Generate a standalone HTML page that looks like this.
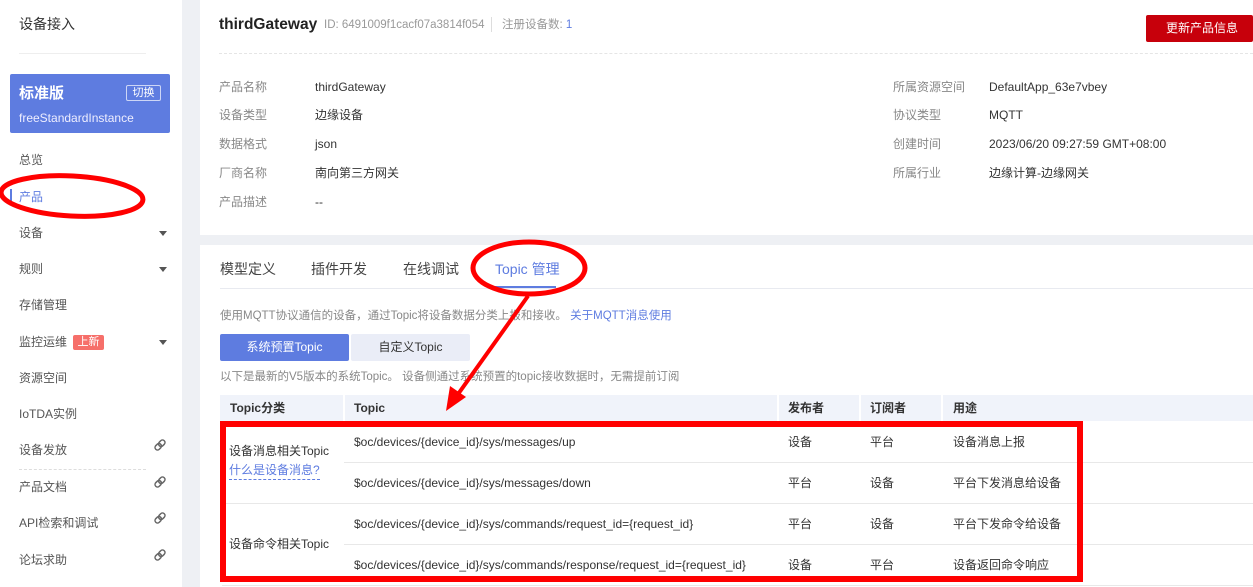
<!DOCTYPE html>
<html><head><meta charset="utf-8"><style>
*{margin:0;padding:0;box-sizing:border-box}
body{width:1253px;height:587px;overflow:hidden;background:#eef0f4;font-family:"Liberation Sans","Noto Sans CJK SC",sans-serif;position:relative;color:#333;line-height:15px}
.a{position:absolute;white-space:nowrap}
.side{position:absolute;left:0;top:0;width:182px;height:587px;background:#fff}
.nav{position:absolute;left:19px;font-size:12px;color:#555;white-space:nowrap}
.caret{position:absolute;left:159px;width:0;height:0;border-left:4px solid transparent;border-right:4px solid transparent;border-top:5px solid #555}
.lk{position:absolute;left:154px}
.lbl{position:absolute;font-size:12px;color:#888;white-space:nowrap}
.val{position:absolute;font-size:12px;color:#333;white-space:nowrap}
.td{position:absolute;font-size:12px;color:#333;white-space:nowrap}
.hl{position:absolute;left:222px;width:1031px;height:1px;background:#e8e8e8}
</style></head><body>
<div class="side">
<div class="a" style="left:19px;top:17px;font-size:14px;color:#333">设备接入</div>
<div class="a" style="left:19px;top:53px;width:127px;height:1px;background:#eee"></div>
<div class="a" style="left:10px;top:74px;width:160px;height:59px;background:#5e7ce0;border-radius:2px"></div>
<div class="a" style="left:19px;top:85px;font-size:15px;color:#fff;font-weight:bold;line-height:17px">标准版</div>
<div class="a" style="left:126px;top:85px;width:35px;height:16px;border:1px solid #cdd6f6;border-radius:2px;color:#fff;font-size:11px;text-align:center;line-height:14px">切换</div>
<div class="a" style="left:19px;top:111px;font-size:12px;color:#eef">freeStandardInstance</div>
<div class="nav" style="top:153px">总览</div>
<div class="a" style="left:10px;top:189px;width:2px;height:16px;background:#5e7ce0"></div>
<div class="nav" style="top:190px;color:#5e7ce0">产品</div>
<div class="nav" style="top:226px">设备</div><div class="caret" style="top:231px"></div>
<div class="nav" style="top:262px">规则</div><div class="caret" style="top:267px"></div>
<div class="nav" style="top:298px">存储管理</div>
<div class="nav" style="top:335px">监控运维</div>
<div class="a" style="left:73px;top:335px;width:31px;height:15px;background:#f66f6a;border-radius:2px;color:#fff;font-size:11px;text-align:center;line-height:15px">上新</div>
<div class="caret" style="top:340px"></div>
<div class="nav" style="top:371px">资源空间</div>
<div class="nav" style="top:407px">IoTDA实例</div>
<div class="nav" style="top:443px">设备发放</div>
<div class="a" style="left:19px;top:469px;width:127px;border-top:1px dashed #ddd"></div>
<div class="nav" style="top:480px">产品文档</div>
<div class="nav" style="top:516px">API检索和调试</div>
<div class="nav" style="top:553px">论坛求助</div>
<svg class="a" style="left:0;top:0" width="182" height="587">
<g fill="none" stroke="#666" stroke-width="1.5">
<g transform="translate(160,445) rotate(-45)"><rect x="-6" y="-2.5" width="7" height="5" rx="2.5"/><rect x="-1" y="-2.5" width="7" height="5" rx="2.5"/></g>
<g transform="translate(160,482) rotate(-45)"><rect x="-6" y="-2.5" width="7" height="5" rx="2.5"/><rect x="-1" y="-2.5" width="7" height="5" rx="2.5"/></g>
<g transform="translate(160,518) rotate(-45)"><rect x="-6" y="-2.5" width="7" height="5" rx="2.5"/><rect x="-1" y="-2.5" width="7" height="5" rx="2.5"/></g>
<g transform="translate(160,555) rotate(-45)"><rect x="-6" y="-2.5" width="7" height="5" rx="2.5"/><rect x="-1" y="-2.5" width="7" height="5" rx="2.5"/></g>
</g></svg>
</div>
<!-- top card -->
<div class="a" style="left:200px;top:0;width:1053px;height:235px;background:#fff"></div>
<div class="a" style="left:219px;top:16px;font-size:15.5px;font-weight:bold;color:#222;line-height:18px">thirdGateway</div>
<div class="a" style="left:324px;top:18px;font-size:11.5px;color:#999">ID: 6491009f1cacf07a3814f054</div>
<div class="a" style="left:491px;top:17px;width:1px;height:15px;background:#ddd"></div>
<div class="a" style="left:502px;top:18px;font-size:11.5px;color:#999">注册设备数: <span style="color:#5e7ce0">1</span></div>
<div class="a" style="left:1146px;top:15px;width:107px;height:27px;background:#c7000b;border-radius:2px;color:#fff;font-size:12px;line-height:27px;padding-left:20px">更新产品信息</div>
<div class="a" style="left:219px;top:53px;width:1034px;border-top:1px dashed #e5e5e5"></div>
<div class="lbl" style="left:219px;top:80px">产品名称</div><div class="val" style="left:315px;top:80px">thirdGateway</div>
<div class="lbl" style="left:219px;top:108px">设备类型</div><div class="val" style="left:315px;top:108px">边缘设备</div>
<div class="lbl" style="left:219px;top:137px">数据格式</div><div class="val" style="left:315px;top:137px">json</div>
<div class="lbl" style="left:219px;top:166px">厂商名称</div><div class="val" style="left:315px;top:166px">南向第三方网关</div>
<div class="lbl" style="left:219px;top:195px">产品描述</div><div class="val" style="left:315px;top:195px">--</div>
<div class="lbl" style="left:893px;top:80px">所属资源空间</div><div class="val" style="left:989px;top:80px">DefaultApp_63e7vbey</div>
<div class="lbl" style="left:893px;top:108px">协议类型</div><div class="val" style="left:989px;top:108px">MQTT</div>
<div class="lbl" style="left:893px;top:137px">创建时间</div><div class="val" style="left:989px;top:137px">2023/06/20 09:27:59 GMT+08:00</div>
<div class="lbl" style="left:893px;top:166px">所属行业</div><div class="val" style="left:989px;top:166px">边缘计算-边缘网关</div>
<!-- bottom card -->
<div class="a" style="left:200px;top:245px;width:1053px;height:342px;background:#fff"></div>
<div class="a" style="left:220px;top:260px;font-size:14px;color:#444;line-height:18px">模型定义</div>
<div class="a" style="left:311px;top:260px;font-size:14px;color:#444;line-height:18px">插件开发</div>
<div class="a" style="left:403px;top:260px;font-size:14px;color:#444;line-height:18px">在线调试</div>
<div class="a" style="left:495px;top:260px;font-size:14px;color:#5e7ce0;line-height:18px">Topic 管理</div>
<div class="a" style="left:220px;top:288px;width:1033px;height:1px;background:#e8eaf0"></div>
<div class="a" style="left:495px;top:286px;width:61px;height:2px;background:#5e7ce0"></div>
<div class="a" style="left:220px;top:309px;font-size:11.5px;color:#888">使用MQTT协议通信的设备，通过Topic将设备数据分类上报和接收。 <span style="color:#5e7ce0">关于MQTT消息使用</span></div>
<div class="a" style="left:220px;top:334px;width:129px;height:27px;background:#5e7ce0;color:#fff;font-size:12px;text-align:center;line-height:27px;border-radius:2px">系统预置Topic</div>
<div class="a" style="left:351px;top:334px;width:119px;height:27px;background:#eaedf7;color:#333;font-size:12px;text-align:center;line-height:27px;border-radius:2px">自定义Topic</div>
<div class="a" style="left:220px;top:370px;font-size:11.5px;color:#888">以下是最新的V5版本的系统Topic。 设备侧通过系统预置的topic接收数据时，无需提前订阅</div>
<div class="a" style="left:220px;top:395px;width:1033px;height:26px;background:#f0f3fa"></div>
<div class="a" style="left:343px;top:395px;width:2px;height:26px;background:#fff"></div>
<div class="a" style="left:777px;top:395px;width:2px;height:26px;background:#fff"></div>
<div class="a" style="left:859px;top:395px;width:2px;height:26px;background:#fff"></div>
<div class="a" style="left:941px;top:395px;width:2px;height:26px;background:#fff"></div>
<div class="td" style="left:230px;top:401px;font-weight:bold">Topic分类</div>
<div class="td" style="left:354px;top:401px;font-weight:bold">Topic</div>
<div class="td" style="left:788px;top:401px;font-weight:bold">发布者</div>
<div class="td" style="left:870px;top:401px;font-weight:bold">订阅者</div>
<div class="td" style="left:953px;top:401px;font-weight:bold">用途</div>
<div class="hl" style="top:462px;left:344px"></div><div class="hl" style="top:503px"></div><div class="hl" style="top:544px;left:344px"></div><div class="hl" style="top:585px"></div>
<div class="td" style="left:229px;top:444px">设备消息相关Topic</div>
<div class="td" style="left:229px;top:463px;color:#5e7ce0;border-bottom:1px dashed #5e7ce0;padding-bottom:1px">什么是设备消息?</div>
<div class="td" style="left:229px;top:537px">设备命令相关Topic</div>
<div class="td" style="left:354px;top:435px">$oc/devices/{device_id}/sys/messages/up</div>
<div class="td" style="left:354px;top:476px">$oc/devices/{device_id}/sys/messages/down</div>
<div class="td" style="left:354px;top:517px">$oc/devices/{device_id}/sys/commands/request_id={request_id}</div>
<div class="td" style="left:354px;top:558px">$oc/devices/{device_id}/sys/commands/response/request_id={request_id}</div>
<div class="td" style="left:788px;top:435px">设备</div><div class="td" style="left:870px;top:435px">平台</div><div class="td" style="left:953px;top:435px">设备消息上报</div>
<div class="td" style="left:788px;top:476px">平台</div><div class="td" style="left:870px;top:476px">设备</div><div class="td" style="left:953px;top:476px">平台下发消息给设备</div>
<div class="td" style="left:788px;top:517px">平台</div><div class="td" style="left:870px;top:517px">设备</div><div class="td" style="left:953px;top:517px">平台下发命令给设备</div>
<div class="td" style="left:788px;top:558px">设备</div><div class="td" style="left:870px;top:558px">平台</div><div class="td" style="left:953px;top:558px">设备返回命令响应</div>
<!-- annotations -->
<svg class="a" style="left:0;top:0" width="1253" height="587">
<rect x="223" y="424" width="857" height="155" fill="none" stroke="#ff0000" stroke-width="6"/>
<ellipse cx="72" cy="196" rx="71" ry="20" fill="none" stroke="#ff0000" stroke-width="5" transform="rotate(3 72 196)"/>
<ellipse cx="529" cy="268" rx="56" ry="26" fill="none" stroke="#ff0000" stroke-width="5"/>
<line x1="528" y1="296" x2="456" y2="397" stroke="#ff0000" stroke-width="4"/>
<polygon points="446,411 450,386 466,397" fill="#ff0000"/>
</svg>
</body></html>
